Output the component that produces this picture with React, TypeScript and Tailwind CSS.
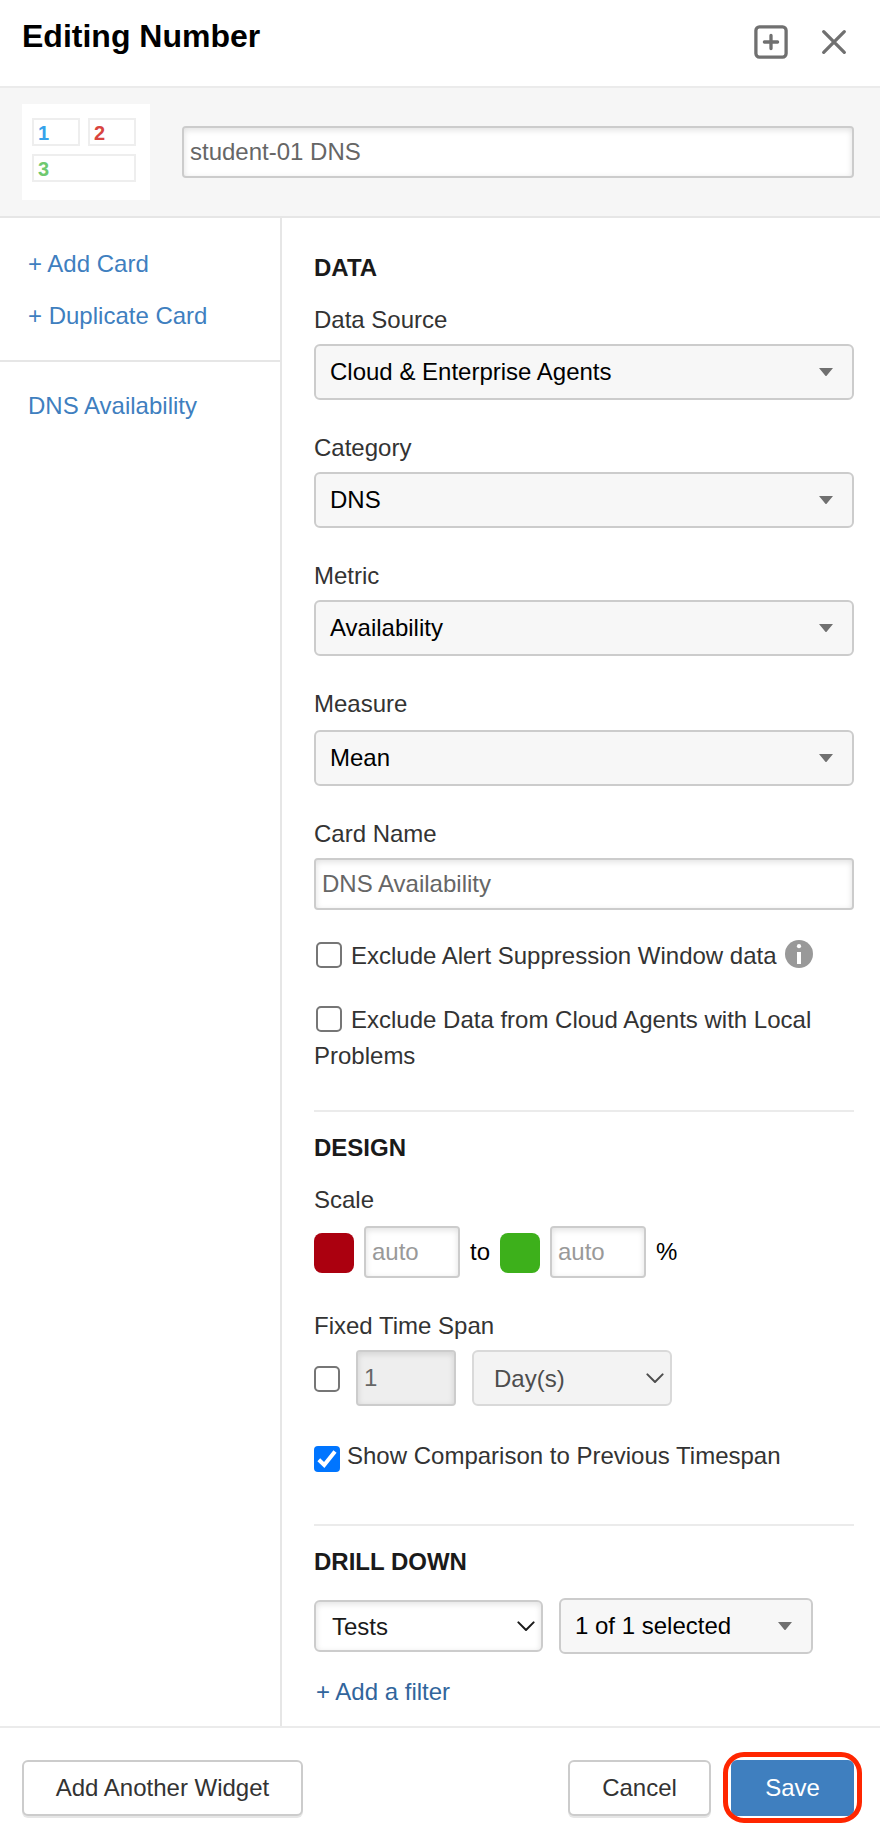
import React from "react";

const inputShadow = "shadow-[inset_0_2px_6px_rgba(0,0,0,0.12)]";

function Caret({ className = "" }: { className?: string }) {
  return (
    <svg width="14" height="8" viewBox="0 0 14 8" className={className}>
      <path d="M0 0H14L7.8 7.4Q7 8.4 6.2 7.4Z" fill="#707070" />
    </svg>
  );
}

function Chevron({ color }: { color: string }) {
  return (
    <svg width="18" height="11" viewBox="0 0 18 11" fill="none" className="shrink-0">
      <path d="M1.4 1.4L9 9L16.6 1.4" stroke={color} strokeWidth="2" strokeLinecap="round" strokeLinejoin="round" />
    </svg>
  );
}

function Heading({ children, className = "" }: { children: React.ReactNode; className?: string }) {
  return <h2 className={`h-7 font-bold leading-7 text-[#1a1a1a] ${className}`}>{children}</h2>;
}

function Label({ children, className = "" }: { children: React.ReactNode; className?: string }) {
  return <div className={`h-7 leading-7 text-[#333] ${className}`}>{children}</div>;
}

function Dropdown({ value, className = "" }: { value: string; className?: string }) {
  return (
    <button
      type="button"
      className={`flex h-14 w-full items-center justify-between rounded-[6px] border-2 border-[#ccc] bg-[#f7f7f7] pr-[19px] pl-[14px] text-left leading-7 text-black ${className}`}
    >
      <span>{value}</span>
      <Caret />
    </button>
  );
}

function CheckBox({ checked = false, className = "" }: { checked?: boolean; className?: string }) {
  return checked ? (
    <span className={`inline-flex size-[26px] shrink-0 items-center justify-center rounded-[4px] bg-[#0075ff] ${className}`}>
      <svg width="26" height="26" viewBox="0 0 26 26" fill="none">
        <path d="M4.8 13.8L10.2 19L21 5.4" stroke="#fff" strokeWidth="4" />
      </svg>
    </span>
  ) : (
    <span className={`inline-block size-[26px] shrink-0 rounded-[5px] border-2 border-[#767676] bg-white ${className}`} />
  );
}

export default function App() {
  return (
    <div className="flex h-[1832px] w-[880px] flex-col overflow-hidden bg-white font-['Liberation_Sans',Arial,sans-serif] text-[24px]">
      <header className="flex h-[88px] shrink-0 items-start justify-between border-b-2 border-[#ebebeb] pr-[33px] pl-[22px]">
        <h1 className="mt-[18px] text-[32px] font-bold leading-9 text-black">Editing Number</h1>
        <div className="mt-[25px] flex items-center gap-[33px]">
          <svg width="34" height="34" viewBox="0 0 34 34" fill="none" stroke="#707070" strokeWidth="3.3">
            <rect x="1.9" y="1.9" width="30.2" height="30.2" rx="3.5" />
            <path d="M17 10.4V23.6M10.4 17H23.6" strokeLinecap="round" />
          </svg>
          <svg width="26" height="26" viewBox="0 0 26 26" fill="none" stroke="#707070" strokeWidth="3.3" strokeLinecap="round">
            <path d="M2.7 2.7L23.3 23.3M23.3 2.7L2.7 23.3" />
          </svg>
        </div>
      </header>

      <section className="flex h-[130px] shrink-0 items-start border-b-2 border-[#e6e6e6] bg-[#f6f6f6] pl-[22px]">
        <div className="mt-4 grid h-24 w-32 grid-cols-2 content-start gap-2 bg-white pt-[14px] pr-[14px] pl-[10px] text-[20px] font-bold leading-[26px]">
          <div className="h-7 border-2 border-[#eee] pl-[4px] text-[#36a2eb]">1</div>
          <div className="h-7 border-2 border-[#eee] pl-[4px] text-[#d9453f]">2</div>
          <div className="col-span-2 h-7 border-2 border-[#eee] pl-[4px] text-[#6fc96f]">3</div>
        </div>
        <input
          aria-label="Widget title"
          defaultValue="student-01 DNS"
          className={`mt-[38px] ml-8 h-[52px] w-[672px] rounded-[4px] border-2 border-[#ccc] bg-white pl-[6px] text-[#666] ${inputShadow}`}
        />
      </section>

      <div className="flex min-h-0 flex-1">
        <aside className="w-[282px] shrink-0 border-r-2 border-[#e6e6e6] text-[#3f7fbf]">
          <nav className="flex h-[144px] flex-col gap-6 border-b-2 border-[#e6e6e6] pt-8 pl-7 leading-7">
            <a>+ Add Card</a>
            <a>+ Duplicate Card</a>
          </nav>
          <a className="mt-[30px] block pl-7 leading-7">DNS Availability</a>
        </aside>

        <main className="w-[572px] shrink-0 pt-9 pl-8">
          <Heading>DATA</Heading>
          <Label className="mt-6">Data Source</Label>
          <Dropdown className="mt-[10px]" value="Cloud &amp; Enterprise Agents" />
          <Label className="mt-[34px]">Category</Label>
          <Dropdown className="mt-[10px]" value="DNS" />
          <Label className="mt-[34px]">Metric</Label>
          <Dropdown className="mt-[10px]" value="Availability" />
          <Label className="mt-[34px]">Measure</Label>
          <Dropdown className="mt-3" value="Mean" />
          <Label className="mt-[34px]">Card Name</Label>
          <input
            aria-label="Card name"
            defaultValue="DNS Availability"
            className={`mt-[10px] block h-[52px] w-full rounded-[4px] border-2 border-[#ccc] bg-white pl-[6px] text-[#666] ${inputShadow}`}
          />
          <div className="mt-8 flex h-7 items-start pl-[2px] leading-7 text-[#333]">
            <CheckBox />
            <span className="ml-[9px] whitespace-nowrap">Exclude Alert Suppression Window data</span>
            <svg width="28" height="28" viewBox="0 0 28 28" className="-mt-[2px] ml-2 shrink-0">
              <circle cx="14" cy="14" r="14" fill="#999" />
              <circle cx="14" cy="6.2" r="2.1" fill="#fff" />
              <path d="M12 12H16V24H12Z" fill="#fff" />
            </svg>
          </div>
          <div className="mt-8 leading-9 text-[#333]">
            <CheckBox className="mr-[9px] ml-[2px] align-[-4px]" />
            Exclude Data from Cloud Agents with Local Problems
          </div>

          <hr className="mt-9 border-t-2 border-[#ebebeb]" />
          <Heading className="mt-[22px]">DESIGN</Heading>
          <Label className="mt-6">Scale</Label>
          <div className="mt-3 flex h-[52px] items-center leading-7 text-black">
            <span className="mt-[2px] size-10 rounded-[8px] bg-[#ab000f]" />
            <input
              aria-label="Scale minimum"
              placeholder="auto"
              className={`ml-[10px] h-[52px] w-24 rounded-[4px] border-2 border-[#ccc] bg-white pl-[6px] placeholder:text-[#999] ${inputShadow}`}
            />
            <span className="ml-[10px] w-[30px]">to</span>
            <span className="mt-[2px] size-10 rounded-[8px] bg-[#3db01b]" />
            <input
              aria-label="Scale maximum"
              placeholder="auto"
              className={`ml-[10px] h-[52px] w-24 rounded-[4px] border-2 border-[#ccc] bg-white pl-[6px] placeholder:text-[#999] ${inputShadow}`}
            />
            <span className="ml-[10px]">%</span>
          </div>
          <Label className="mt-[34px]">Fixed Time Span</Label>
          <div className="mt-[10px] flex h-14 items-start">
            <CheckBox className="mt-4" />
            <input
              aria-label="Span length"
              readOnly
              value="1"
              className={`ml-4 h-14 w-[100px] rounded-[4px] border-2 border-[#ccc] bg-[#eee] pl-[6px] text-[#666] ${inputShadow}`}
            />
            <div className="ml-4 flex h-14 w-[200px] items-center justify-between rounded-[6px] border-2 border-[#d9d9d9] bg-[#f3f3f3] pr-[6px] pl-5 leading-7 text-[#4d4d4d]">
              <span className="mt-px">Day(s)</span>
              <Chevron color="#4d4d4d" />
            </div>
          </div>
          <div className="mt-9 flex h-[30px] items-start leading-7 text-[#333]">
            <CheckBox checked className="mt-1" />
            <span className="ml-[7px] whitespace-nowrap">Show Comparison to Previous Timespan</span>
          </div>

          <hr className="mt-[52px] border-t-2 border-[#ebebeb]" />
          <Heading className="mt-[22px]">DRILL DOWN</Heading>
          <div className="mt-[22px] flex h-14 items-center gap-4">
            <div className={`flex h-[52px] w-[229px] items-center justify-between rounded-[6px] border-2 border-[#ccc] bg-white pr-[6px] pl-4 leading-7 text-[#1a1a1a] ${inputShadow}`}>
              <span className="mt-px">Tests</span>
              <Chevron color="#1a1a1a" />
            </div>
            <div className="w-[254px]">
              <Dropdown value="1 of 1 selected" />
            </div>
          </div>
          <a className="mt-6 block pl-[2px] leading-7 text-[#31659c]">+ Add a filter</a>
        </main>
      </div>

      <footer className="flex h-[106px] shrink-0 items-start border-t-2 border-[#ebebeb] pt-8 pl-[22px] leading-7 text-[#333]">
        <button type="button" className="h-14 w-[281px] rounded-[6px] border-2 border-[#ccc] bg-white shadow-[0_2px_0_#e6e6e6]">
          Add Another Widget
        </button>
        <button type="button" className="ml-[265px] h-14 w-[143px] rounded-[6px] border-2 border-[#ccc] bg-white shadow-[0_2px_0_#e6e6e6]">
          Cancel
        </button>
        <div className="relative ml-5">
          <button type="button" className="block h-14 w-[123px] rounded-[6px] bg-[#3f7fbf] text-white">
            Save
          </button>
          <span className="pointer-events-none absolute -top-2 -left-2 h-[71px] w-[139px] rounded-[21px] border-[5px] border-[#ff2600]" />
        </div>
      </footer>
    </div>
  );
}
